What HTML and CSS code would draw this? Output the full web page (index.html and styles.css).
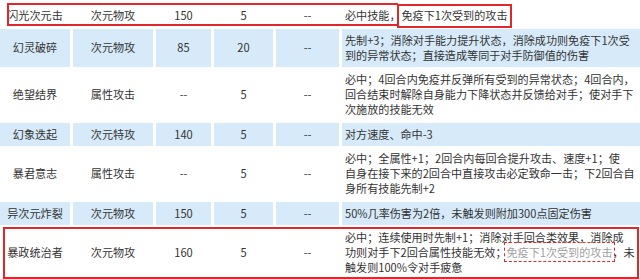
FILE: index.html
```html
<!DOCTYPE html>
<html lang="zh-CN">
<head>
<meta charset="utf-8">
<title>技能表</title>
<link rel="stylesheet" href="styles.css">
</head>
<body>
<div class="page">
  <table class="skills">
    <colgroup>
      <col class="c-name">
      <col class="c-type">
      <col class="c-power">
      <col class="c-pp">
      <col class="c-prio">
      <col class="c-desc">
    </colgroup>
    <tbody>
      <tr>
        <td>闪光次元击</td><td>次元物攻</td><td>150</td><td>5</td><td>--</td>
        <td class="desc">必中技能，<span class="mark">免疫下1次受到的攻击</span></td>
      </tr>
      <tr class="alt">
        <td>幻灵破碎</td><td>次元物攻</td><td>85</td><td>20</td><td>--</td>
        <td class="desc">先制+3；消除对手能力提升状态，消除成功则免疫下1次受<br>到的异常状态；直接造成等同于对手防御值的伤害</td>
      </tr>
      <tr>
        <td>绝望结界</td><td>属性攻击</td><td>--</td><td>5</td><td>--</td>
        <td class="desc">必中；4回合内免疫并反弹所有受到的异常状态；4回合内，<br>回合结束时解除自身能力下降状态并反馈给对手；使对手下<br>次施放的技能无效</td>
      </tr>
      <tr class="alt">
        <td>幻象迭起</td><td>次元特攻</td><td>140</td><td>5</td><td>--</td>
        <td class="desc">对方速度、命中-3</td>
      </tr>
      <tr>
        <td>暴君意志</td><td>属性攻击</td><td>--</td><td>5</td><td>--</td>
        <td class="desc">必中；全属性+1；2回合内每回合提升攻击、速度+1；使<br>自身在接下来的2回合中直接攻击必定致命一击；下2回合自<br>身所有技能先制+2</td>
      </tr>
      <tr class="alt">
        <td>异次元炸裂</td><td>次元物攻</td><td>150</td><td>5</td><td>--</td>
        <td class="desc">50%几率伤害为2倍，未触发则附加300点固定伤害</td>
      </tr>
      <tr>
        <td>暴政统治者</td><td>次元物攻</td><td>160</td><td>5</td><td>--</td>
        <td class="desc">必中；连续使用时先制+1；消除对手回合类效果，消除成<br>功则对手下2回合属性技能无效；<span class="stamp">免疫下1次受到的攻击</span>，未<br>触发则100%令对手疲惫</td>
      </tr>
    </tbody>
  </table>
  <div class="box box-top"></div>
  <div class="box box-bottom"></div>
</div>
</body>
</html>
```

FILE: styles.css
```css
html, body {
  margin: 0;
  padding: 0;
  background: #ffffff;
}

.page {
  position: relative;
  width: 640px;
  height: 279px;
  overflow: hidden;
}

.skills {
  table-layout: fixed;
  border-collapse: separate;
  border-spacing: 3px 2px;
  width: 646px;
  margin: 2.5px 0 0 -3px;
  font-family: "Noto Sans CJK SC", "Noto Sans", sans-serif;
  font-size: 11.1px;
  line-height: 15px;
  color: #333333;
  text-autospace: no-autospace;
}

.c-name { width: 70px; }
.c-type { width: 80px; }
.c-power { width: 55px; }
.c-pp { width: 59px; }
.c-prio { width: 63px; }

.skills td {
  padding: 3.75px 3px;
  text-align: center;
  vertical-align: middle;
  white-space: nowrap;
}

.skills td.desc {
  text-align: left;
  padding-right: 0;
}

.skills tr.alt td {
  background: #d6eaf9;
}

.mark {
  display: inline-block;
  border: 2px solid #e0282b;
  padding: 2px 2px 3px;
  margin: -4px 0 -5px -3px;
}

.stamp {
  outline: 1.5px dashed #e0282b;
  outline-offset: 1px;
  color: #a0a0a0;
  background: rgba(255, 255, 255, 0.7);
}

.box {
  position: absolute;
  border: 2px solid #e0282b;
  box-sizing: border-box;
}

.box-top {
  left: 7px;
  top: 3px;
  width: 391px;
  height: 23px;
  border-right: none;
}

.box-bottom {
  left: 3px;
  top: 227px;
  width: 636px;
  height: 52px;
}
```
